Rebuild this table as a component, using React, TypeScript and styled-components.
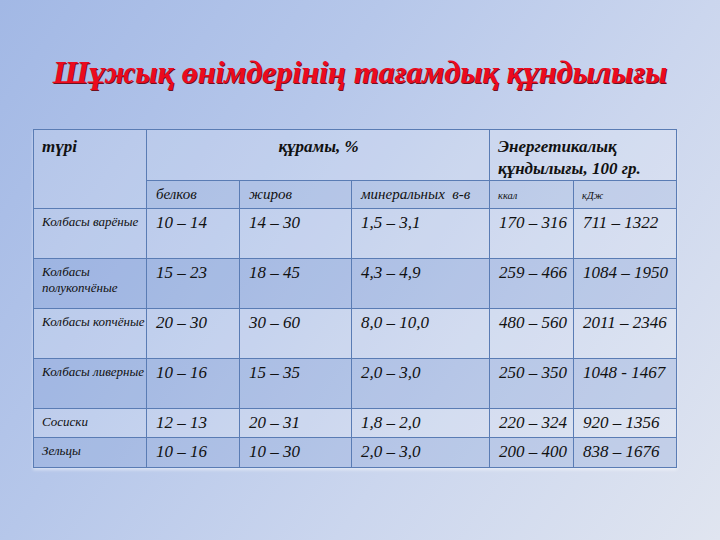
import styled, { createGlobalStyle } from "styled-components"

/* ------------------------------------------- GLOBAL ------------------------------------------- */
const serif = `"Liberation Serif", "Times New Roman", "DejaVu Serif", serif`

const GlobalStyle = createGlobalStyle`
    html, body {
        margin: 0;
        padding: 0;
    }
    body {
        width: 720px;
        height: 540px;
        overflow: hidden;
        font-family: ${serif};
    }
    table, th, td {
        font-family: ${serif};
    }
`

/* --------------------------------------------- CSS -------------------------------------------- */
const Slide = styled.div`
    width: 720px;
    height: 540px;
    box-sizing: border-box;
    padding-top: 50px;
    background: linear-gradient(125deg, #a2b8e5 0%, #b6c7ea 35%, #cbd6ee 65%, #e0e5f0 100%);
    display: flex;
    flex-direction: column;
    align-items: center;
`

const Title = styled.h1`
    margin: 0;
    height: 79px;
    font-family: ${serif};
    font-style: italic;
    font-weight: bold;
    font-size: 32px;
    line-height: 44px;
    color: #ec0a1e;
    text-shadow: 1px 1px 0 #6e1020;
`

const Table = styled.table`
    border-collapse: collapse;
    table-layout: fixed;
    width: 643px;
    margin-right: auto;
    margin-left: 33px;
    color: #111;
    box-shadow: 0 2px 3px rgba(255, 255, 255, 0.5);

    td, th {
        border: 1px solid #5a7cb4;
        box-sizing: border-box;
        vertical-align: top;
        text-align: left;
        font-weight: normal;
        overflow: hidden;
    }
`

const Row = styled.tr<{ $shade: "light" | "dark"; $h: number }>`
    height: ${({ $h }) => $h}px;
    background: ${({ $shade }) =>
        $shade === "dark" ? "rgba(90, 130, 200, 0.18)" : "rgba(255, 255, 255, 0.15)"};
`

const HeadCell = styled.th<{ $center?: boolean }>`
    padding: 6px 7px 0 8px;
    font-style: italic;
    font-weight: bold !important;
    font-size: 17px;
    line-height: 22px;
    text-align: ${({ $center }) => ($center ? "center" : "left")} !important;
`

const SubCell = styled.th<{ $small?: boolean }>`
    padding: ${({ $small }) => ($small ? "6px 8px 0" : "4px 9px 0")};
    font-style: italic;
    font-size: ${({ $small }) => ($small ? "10.5px" : "15px")};
    line-height: 18px;
    background: rgba(80, 120, 190, 0.14);
`

const NameCell = styled.td`
    padding: 5px 0 0 8px;
    font-style: italic;
    font-size: 13px;
    line-height: 16px;
`

const ValueCell = styled.td<{ $bold?: boolean }>`
    padding: 3px 4px 0 9px;
    font-style: italic;
    font-size: 17px;
    line-height: 22px;
    font-weight: ${({ $bold }) => ($bold ? "bold" : "normal")};
    white-space: nowrap;
`

/* -------------------------------------------- DATA -------------------------------------------- */
type Value = [string, boolean]

interface Product {
    name: string
    height: number
    values: Value[]
}

const products: Product[] = [
    { name: "Колбасы варёные", height: 50, values: [["10 – 14", true], ["14 – 30", false], ["1,5 – 3,1", false], ["170 – 316", true], ["711 – 1322", false]] },
    { name: "Колбасы полукопчёные", height: 50, values: [["15 – 23", false], ["18 – 45", false], ["4,3 – 4,9", false], ["259 – 466", false], ["1084 – 1950", false]] },
    { name: "Колбасы копчёные", height: 50, values: [["20 – 30", true], ["30 – 60", true], ["8,0 – 10,0", false], ["480 – 560", false], ["2011 – 2346", false]] },
    { name: "Колбасы ливерные", height: 50, values: [["10 – 16", true], ["15 – 35", false], ["2,0 – 3,0", true], ["250 – 350", false], ["1048 - 1467", false]] },
    { name: "Сосиски", height: 29, values: [["12 – 13", false], ["20 – 31", false], ["1,8 – 2,0", false], ["220 – 324", false], ["920 – 1356", true]] },
    { name: "Зельцы", height: 30, values: [["10 – 16", true], ["10 – 30", false], ["2,0 – 3,0", true], ["200 – 400", true], ["838 – 1676", true]] },
]

const widths = [113, 93, 112, 138, 84, 103]

/* ------------------------------------------ COMPONENT ----------------------------------------- */
export default function App() {
    return (
        <>
            <GlobalStyle />
            <Slide>
                <Title>Шұжық өнімдерінің тағамдық құндылығы</Title>
                <Table>
                    <colgroup>
                        {widths.map((w, i) => (
                            <col key={i} style={{ width: w }} />
                        ))}
                    </colgroup>
                    <thead>
                        <Row $shade="light" $h={51}>
                            <HeadCell rowSpan={2}>түрі</HeadCell>
                            <HeadCell colSpan={3} $center>құрамы, %</HeadCell>
                            <HeadCell colSpan={2}>Энергетикалық құндылығы, 100 гр.</HeadCell>
                        </Row>
                        <Row $shade="light" $h={28}>
                            <SubCell>белков</SubCell>
                            <SubCell>жиров</SubCell>
                            <SubCell>минеральных &nbsp;в-в</SubCell>
                            <SubCell $small>ккал</SubCell>
                            <SubCell $small>кДж</SubCell>
                        </Row>
                    </thead>
                    <tbody>
                        {products.map((p, i) => (
                            <Row key={p.name} $shade={i % 2 ? "dark" : "light"} $h={p.height}>
                                <NameCell>{p.name}</NameCell>
                                {p.values.map(([v, bold], j) => (
                                    <ValueCell key={j} $bold={bold}>{v}</ValueCell>
                                ))}
                            </Row>
                        ))}
                    </tbody>
                </Table>
            </Slide>
        </>
    )
}
